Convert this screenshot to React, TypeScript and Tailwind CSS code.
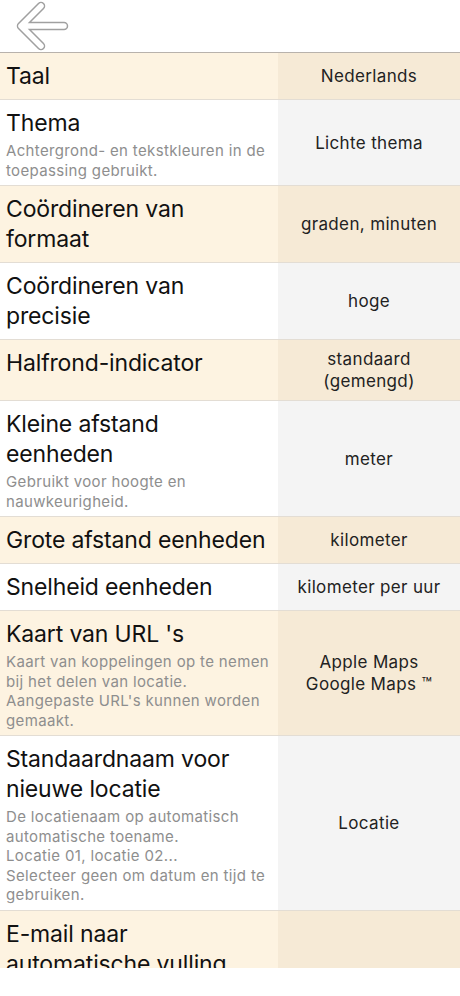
import React from "react";

type Setting = {
  title: string;
  hint?: string;
  value: string;
};

const settings: Setting[] = [
  { title: "Taal", value: "Nederlands" },
  {
    title: "Thema",
    hint: "Achtergrond- en tekstkleuren in de toepassing gebruikt.",
    value: "Lichte thema",
  },
  { title: "Coördineren van\nformaat", value: "graden, minuten" },
  { title: "Coördineren van\nprecisie", value: "hoge" },
  { title: "Halfrond-indicator", value: "standaard (gemengd)" },
  {
    title: "Kleine afstand\neenheden",
    hint: "Gebruikt voor hoogte en nauwkeurigheid.",
    value: "meter",
  },
  { title: "Grote afstand eenheden", value: "kilometer" },
  { title: "Snelheid eenheden", value: "kilometer per uur" },
  {
    title: "Kaart van URL 's",
    hint: "Kaart van koppelingen op te nemen bij het delen van locatie.\nAangepaste URL's kunnen worden gemaakt.",
    value: "Apple Maps\nGoogle Maps ™",
  },
  {
    title: "Standaardnaam voor\nnieuwe locatie",
    hint: "De locatienaam op automatisch automatische toename.\nLocatie 01, locatie 02...\nSelecteer geen om datum en tijd te gebruiken.",
    value: "Locatie",
  },
  { title: "E-mail naar\nautomatische vulling", value: "" },
];

function BackArrow() {
  return (
    <svg width="56" height="52" viewBox="0 0 56 52" fill="none">
      <g strokeLinecap="round" strokeLinejoin="round">
        <path d="M27 6 L7 26 L27 46 M7 26 L50 26" stroke="#a0a0a0" strokeWidth="8.5" />
        <path d="M27 6 L7 26 L27 46 M7 26 L50 26" stroke="#ffffff" strokeWidth="5.5" />
      </g>
    </svg>
  );
}

function SettingRow({ item, index }: { item: Setting; index: number }) {
  const cream = index % 2 === 0;
  return (
    <div
      className={`flex border-b border-[#e3ddd4] ${cream ? "bg-[#fdf3e1]" : "bg-white"}`}
    >
      <div className={`min-w-0 flex-1 pt-2 pl-[6px] pr-[3px] ${item.hint ? "pb-[5px]" : "pb-2"}`}>
        <div className="whitespace-pre-line text-[23px] leading-[30px] tracking-[-0.15px] text-[#111111]">
          {item.title}
        </div>
        {item.hint ? (
          <div className="whitespace-pre-line pt-[3px] text-[15px] leading-[19.5px] tracking-[0.35px] text-[#8e8e8e]">
            {item.hint}
          </div>
        ) : null}
      </div>
      <div
        className={`flex w-[182px] shrink-0 items-center justify-center whitespace-pre-line px-2 py-2 text-center text-[17px] leading-[22px] tracking-[0.35px] text-[#222222] ${
          cream ? "bg-[#f6ead6]" : "bg-[#f4f4f4]"
        }`}
      >
        {item.value}
      </div>
    </div>
  );
}

export default function App() {
  return (
    <div
      className="h-[996px] w-[460px] overflow-hidden bg-white"
      style={{ fontFamily: "Inter, 'Liberation Sans', Arial, sans-serif" }}
    >
      <div className="h-[968px] overflow-hidden">
        <header className="flex h-[53px] items-center border-b border-[#b8b2ac] pl-[14px]">
          <BackArrow />
        </header>
        <div>
          {settings.map((item, i) => (
            <SettingRow key={item.title} item={item} index={i} />
          ))}
        </div>
      </div>
    </div>
  );
}
